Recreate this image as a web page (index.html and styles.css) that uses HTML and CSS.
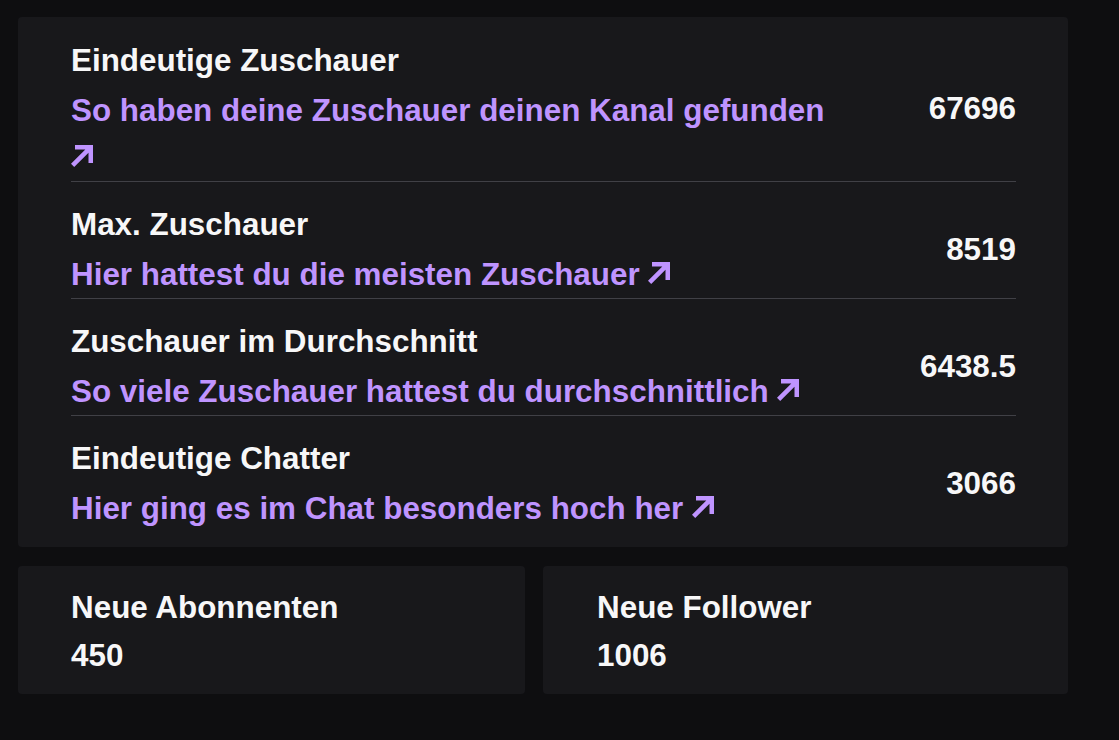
FILE: index.html
```html
<!DOCTYPE html>
<html lang="de">
<head>
<meta charset="utf-8">
<title>Statistik</title>
<link rel="stylesheet" href="styles.css">
</head>
<body>
<main class="page">
  <section class="card stats">
    <div class="row">
      <div class="info">
        <div class="label">Eindeutige Zuschauer</div>
        <a class="link" href="#">So haben deine Zuschauer deinen Kanal gefunden <svg class="arrow" viewBox="0 0 22 22" width="22" height="22"><polygon points="4,0 22,0 22,18 17.5,18 17.5,7.7 3.2,22 0,18.8 14.3,4.5 4,4.5"/></svg></a>
      </div>
      <div class="value">67696</div>
    </div>
    <div class="row">
      <div class="info">
        <div class="label">Max. Zuschauer</div>
        <a class="link" href="#">Hier hattest du die meisten Zuschauer <svg class="arrow" viewBox="0 0 22 22" width="22" height="22"><polygon points="4,0 22,0 22,18 17.5,18 17.5,7.7 3.2,22 0,18.8 14.3,4.5 4,4.5"/></svg></a>
      </div>
      <div class="value">8519</div>
    </div>
    <div class="row">
      <div class="info">
        <div class="label">Zuschauer im Durchschnitt</div>
        <a class="link" href="#">So viele Zuschauer hattest du durchschnittlich <svg class="arrow" viewBox="0 0 22 22" width="22" height="22"><polygon points="4,0 22,0 22,18 17.5,18 17.5,7.7 3.2,22 0,18.8 14.3,4.5 4,4.5"/></svg></a>
      </div>
      <div class="value">6438.5</div>
    </div>
    <div class="row">
      <div class="info">
        <div class="label">Eindeutige Chatter</div>
        <a class="link" href="#">Hier ging es im Chat besonders hoch her <svg class="arrow" viewBox="0 0 22 22" width="22" height="22"><polygon points="4,0 22,0 22,18 17.5,18 17.5,7.7 3.2,22 0,18.8 14.3,4.5 4,4.5"/></svg></a>
      </div>
      <div class="value">3066</div>
    </div>
  </section>
  <section class="pair">
    <div class="card small">
      <div class="label">Neue Abonnenten</div>
      <div class="small-value">450</div>
    </div>
    <div class="card small wide">
      <div class="label">Neue Follower</div>
      <div class="small-value">1006</div>
    </div>
  </section>
</main>
</body>
</html>
```
FILE: styles.css
```css
html, body {
  margin: 0;
  padding: 0;
  background: #0e0e10;
}

body {
  font-family: "Liberation Sans", Arial, Helvetica, sans-serif;
  font-weight: 700;
  font-size: 31.4px;
  color: #f7f7f8;
  width: 1119px;
  height: 740px;
  overflow: hidden;
}

.page {
  padding: 17px 0 0 18px;
  width: 1050px;
}

.card {
  background: #18181b;
  border-radius: 4px;
}

.stats {
  padding: 1px 52px 15px 53px;
}

.row {
  display: flex;
  align-items: center;
  padding-top: 19px;
  border-bottom: 1px solid #404046;
}

.row:last-child {
  border-bottom: none;
}

.info {
  flex: 0 0 760px;
  display: flex;
  flex-direction: column;
}

.label {
  line-height: 48px;
  white-space: nowrap;
}

.link {
  margin-top: 2px;
  line-height: 47px;
  color: #bf94ff;
  text-decoration: none;
}

.arrow {
  fill: #bf94ff;
  vertical-align: 1px;
}

.value {
  flex: 1 1 auto;
  text-align: right;
  white-space: nowrap;
}

.pair {
  display: grid;
  grid-template-columns: 507px 525px;
  column-gap: 18px;
  margin-top: 19px;
}

.small {
  padding: 18px 53px 15px;
}

.small.wide {
  padding-left: 54px;
}

.small-value {
  line-height: 47px;
}
```
